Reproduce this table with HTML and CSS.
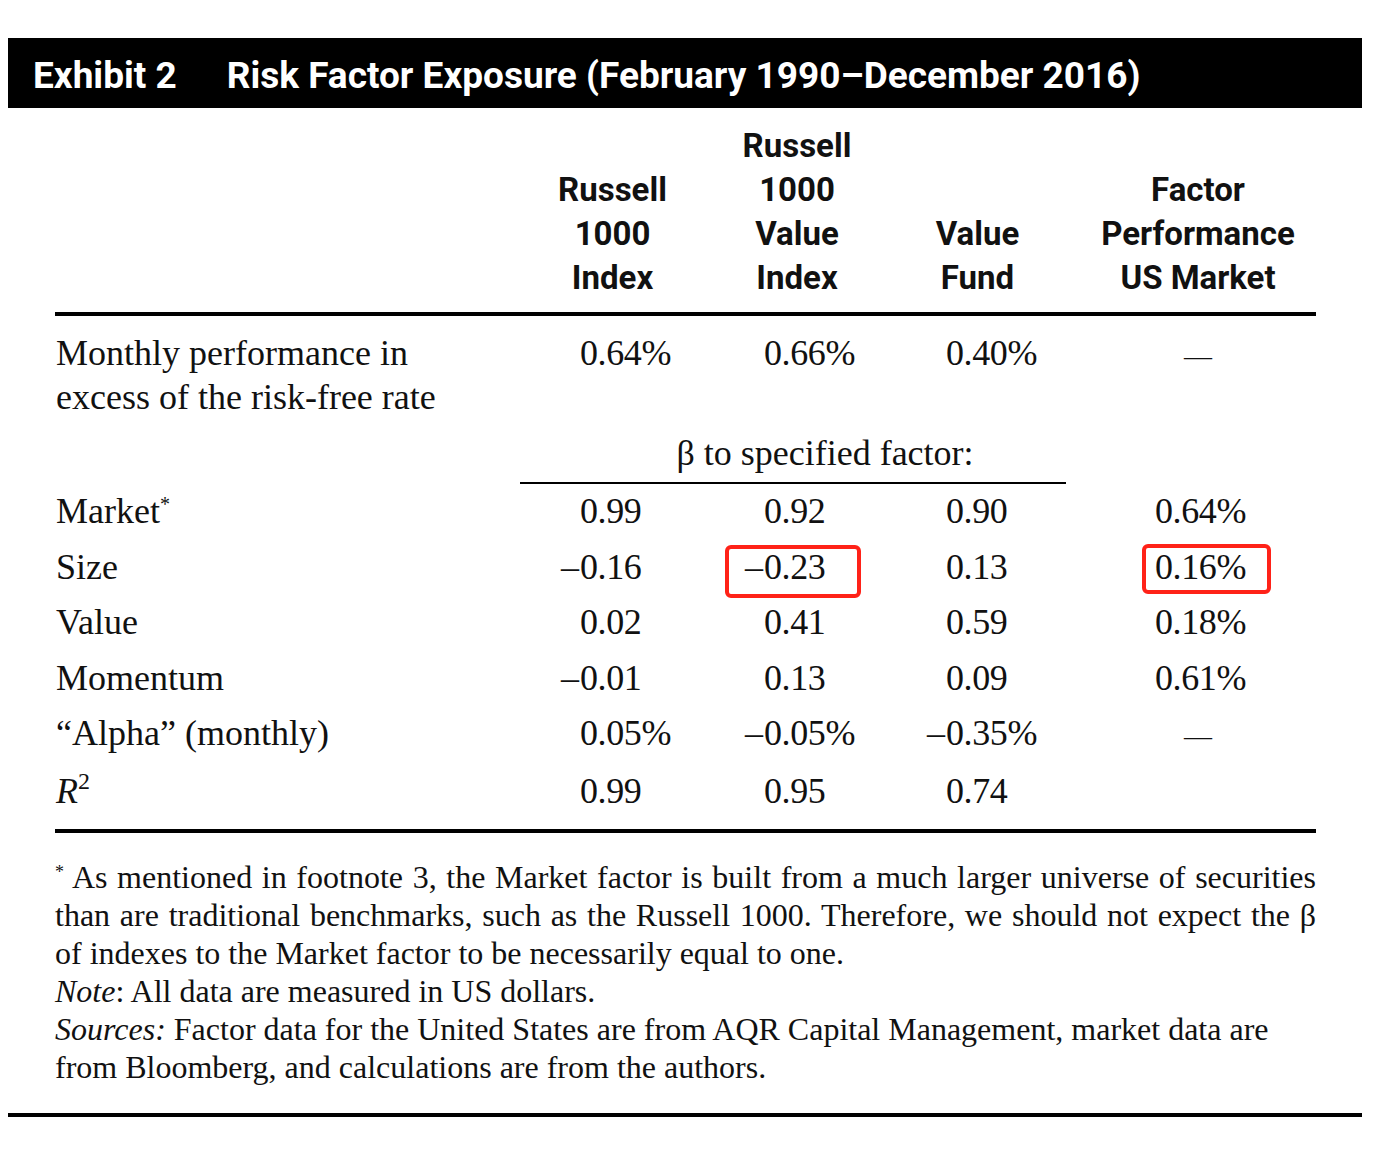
FILE: index.html
```html
<!DOCTYPE html>
<html lang="en">
<head>
<meta charset="utf-8">
<title>Exhibit 2 Risk Factor Exposure</title>
<link rel="stylesheet" href="styles.css">
</head>
<body>
<div class="page">
  <div class="bar"><span class="ex">Exhibit 2</span><span class="tt">Risk Factor Exposure (February 1990–December 2016)</span></div>
  <div class="tbl">
    <div class="grid thead">
      <div></div>
      <div class="h">Russell<br>1000<br>Index</div>
      <div class="h">Russell<br>1000<br>Value<br>Index</div>
      <div class="h">Value<br>Fund</div>
      <div class="h c4">Factor<br>Performance<br>US Market</div>
    </div>
    <div class="rule"></div>
    <div class="grid first">
      <div class="lbl">Monthly performance in<br>excess of the risk-free rate</div>
      <div class="n">0.64%</div>
      <div class="n">0.66%</div>
      <div class="n">0.40%</div>
      <div class="d"><span class="dash">—</span></div>
    </div>
    <div class="grid betarow">
      <div></div>
      <div class="beta">β to specified factor:</div>
    </div>
    <div class="grid row">
      <div class="lbl">Market<sup class="ast">*</sup></div>
      <div class="n">0.99</div>
      <div class="n">0.92</div>
      <div class="n">0.90</div>
      <div class="n">0.64%</div>
    </div>
    <div class="grid row">
      <div class="lbl">Size</div>
      <div class="n"><span class="m">–</span>0.16</div>
      <div class="n"><span class="hl hl1"><span class="m">–</span>0.23</span></div>
      <div class="n">0.13</div>
      <div class="n"><span class="hl hl2">0.16%</span></div>
    </div>
    <div class="grid row">
      <div class="lbl">Value</div>
      <div class="n">0.02</div>
      <div class="n">0.41</div>
      <div class="n">0.59</div>
      <div class="n">0.18%</div>
    </div>
    <div class="grid row">
      <div class="lbl">Momentum</div>
      <div class="n"><span class="m">–</span>0.01</div>
      <div class="n">0.13</div>
      <div class="n">0.09</div>
      <div class="n">0.61%</div>
    </div>
    <div class="grid row">
      <div class="lbl">“Alpha” (monthly)</div>
      <div class="n">0.05%</div>
      <div class="n"><span class="m">–</span>0.05%</div>
      <div class="n"><span class="m">–</span>0.35%</div>
      <div class="d"><span class="dash">—</span></div>
    </div>
    <div class="grid row">
      <div class="lbl"><i>R</i><sup class="sq">2</sup></div>
      <div class="n">0.99</div>
      <div class="n">0.95</div>
      <div class="n">0.74</div>
      <div></div>
    </div>
    <div class="rule bottom"></div>
    <div class="notes">
      <span class="ln just"><sup class="fa">*</sup> As mentioned in footnote 3, the Market factor is built from a much larger universe of securities</span>
      <span class="ln just">than are traditional benchmarks, such as the Russell 1000. Therefore, we should not expect the β</span>
      <span class="ln">of indexes to the Market factor to be necessarily equal to one.</span>
      <span class="ln"><i>Note</i>: All data are measured in US dollars.</span>
      <span class="ln"><i>Sources:</i> Factor data for the United States are from AQR Capital Management, market data are</span>
      <span class="ln">from Bloomberg, and calculations are from the authors.</span>
    </div>
  </div>
  <div class="endrule"></div>
</div>
</body>
</html>
```

FILE: styles.css
```css
html, body {
  margin: 0;
  padding: 0;
  background: #ffffff;
}

.page {
  width: 1354px;
  margin: 0 0 0 8px;
  padding-top: 38px;
  color: #111111;
}

.bar {
  height: 70px;
  box-sizing: border-box;
  padding: 5px 0 0 25px;
  background: #000000;
  color: #ffffff;
  display: flex;
  align-items: center;
  font-family: Roboto, "Liberation Sans", sans-serif;
  font-weight: 700;
  font-size: 37px;
}

.bar .ex {
  margin-right: 50px;
}

.tbl {
  padding: 0 46px 0 47px;
}

.grid {
  display: grid;
  grid-template-columns: 465px 185px 184px 177px 250px;
}

.thead {
  padding-top: 16px;
  padding-bottom: 12px;
  align-items: end;
  font-family: Roboto, "Liberation Sans", sans-serif;
  font-weight: 700;
  font-size: 33px;
  line-height: 44px;
}

.h {
  text-align: center;
}

.h.c4,
.d {
  padding-left: 14px;
  text-align: center;
}

.rule {
  height: 4px;
  background: #000000;
}

.rule.bottom {
  margin-top: 9px;
}

.first,
.row,
.beta {
  font-family: "Liberation Serif", "Times New Roman", serif;
  font-size: 36px;
}

.first {
  padding-top: 15px;
  line-height: 44px;
}

.row {
  line-height: 55.6px;
}

.row:first-of-type {
  padding-top: 1px;
}

.lbl {
  padding-left: 1px;
}

.n {
  white-space: nowrap;
  letter-spacing: -0.4px;
}

.grid > .n:nth-child(2) { padding-left: 60px; }
.grid > .n:nth-child(3) { padding-left: 59px; }
.grid > .n:nth-child(4) { padding-left: 57px; }
.grid > .n:nth-child(5) { padding-left: 89px; }

.m {
  display: inline-block;
  width: 19px;
  margin-left: -19px;
}

.dash {
  font-size: 28px;
}

.betarow {
  margin-top: 12px;
}

.beta {
  grid-column: 2 / span 3;
  line-height: 44px;
  padding-left: 64px;
  padding-bottom: 7px;
  text-align: center;
  border-bottom: 2px solid #000000;
}

sup {
  line-height: 0;
}

.ast {
  font-size: 20px;
  vertical-align: 12px;
}

.sq {
  font-size: 24px;
  vertical-align: 14px;
}

.hl {
  position: relative;
}

.hl::after {
  content: "";
  position: absolute;
  border: 4px solid #ff2218;
  border-radius: 6px;
}

.hl1::after {
  left: -39px;
  right: -36px;
  top: -2px;
  bottom: -11px;
}

.hl2::after {
  left: -13px;
  right: -25px;
  top: -3px;
  bottom: -7px;
}

.notes {
  margin-top: 25px;
  font-family: "Liberation Serif", "Times New Roman", serif;
  font-size: 32px;
  line-height: 38px;
}

.ln {
  display: block;
  white-space: nowrap;
}

.ln.just {
  white-space: normal;
  text-align: justify;
  text-align-last: justify;
}

.fa {
  font-size: 18px;
  vertical-align: 10px;
}

.endrule {
  margin-top: 27px;
  height: 4px;
  background: #000000;
}
```
